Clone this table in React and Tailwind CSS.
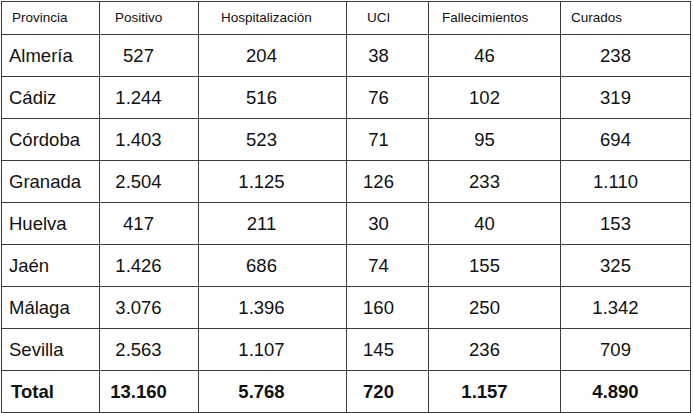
import React from "react";

const headers = [
  { t: "Provincia", c: "pl-[10px]" },
  { t: "Positivo", c: "pl-[15px]" },
  { t: "Hospitalización", c: "pl-[22px]" },
  { t: "UCI", c: "pl-[20px]" },
  { t: "Fallecimientos", c: "pl-[13px]" },
  { t: "Curados", c: "pl-[10px]" },
];

const rows = [
  ["Almería", "527", "204", "38", "46", "238"],
  ["Cádiz", "1.244", "516", "76", "102", "319"],
  ["Córdoba", "1.403", "523", "71", "95", "694"],
  ["Granada", "2.504", "1.125", "126", "233", "1.110"],
  ["Huelva", "417", "211", "30", "40", "153"],
  ["Jaén", "1.426", "686", "74", "155", "325"],
  ["Málaga", "3.076", "1.396", "160", "250", "1.342"],
  ["Sevilla", "2.563", "1.107", "145", "236", "709"],
];

const total = ["Total", "13.160", "5.768", "720", "1.157", "4.890"];

const numPad = ["", "pr-[21px]", "pr-[22px]", "pr-[18px]", "pr-[20px]", "pr-[20px]"];

export default function App() {
  return (
    <div
      className="w-[693px] h-[413px] bg-white pl-px pt-px text-[#111]"
      style={{ fontFamily: '"Liberation Sans", Arial, sans-serif' }}
    >
      <div className="inline-grid grid-cols-[97px_98px_147px_81px_131px_129px] grid-rows-[32px_repeat(9,41px)] gap-px p-px bg-[#3c3c3c]">
        {headers.map((h, i) => (
          <div key={i} className={`bg-white flex items-center text-[13.5px] ${h.c}`}>
            {h.t}
          </div>
        ))}
        {rows.map((r, ri) =>
          r.map((v, ci) =>
            ci === 0 ? (
              <div key={`${ri}-${ci}`} className="bg-white flex items-center pl-[7px] text-[18.5px]">
                {v}
              </div>
            ) : (
              <div
                key={`${ri}-${ci}`}
                className={`bg-white flex items-center justify-center text-[18.5px] ${numPad[ci]}`}
              >
                {v}
              </div>
            )
          )
        )}
        {total.map((v, ci) =>
          ci === 0 ? (
            <div key={`t-${ci}`} className="bg-white flex items-center pl-[9px] text-[18.5px] font-bold">
              {v}
            </div>
          ) : (
            <div
              key={`t-${ci}`}
              className={`bg-white flex items-center justify-center text-[18.5px] font-bold ${numPad[ci]}`}
            >
              {v}
            </div>
          )
        )}
      </div>
    </div>
  );
}
